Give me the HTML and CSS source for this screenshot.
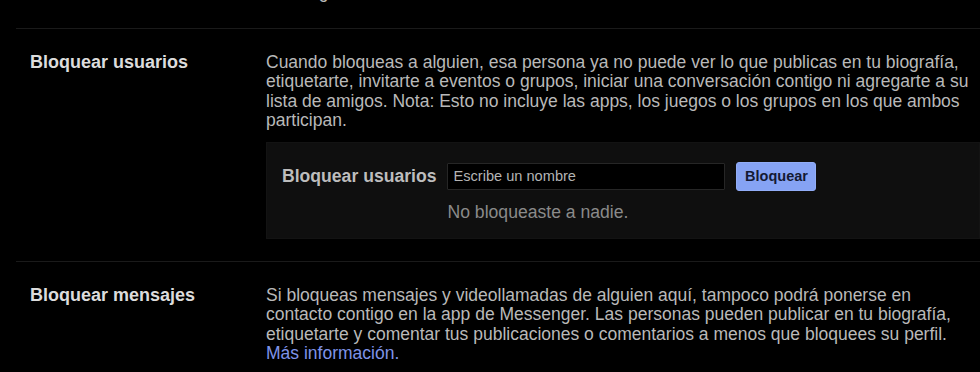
FILE: index.html
```html
<!DOCTYPE html>
<html lang="es">
<head>
<meta charset="utf-8">
<title>Bloquear</title>
<link rel="stylesheet" href="styles.css">
</head>
<body>
<div class="settings">
  <section class="row row-prev">
    <div class="label"></div>
    <div class="content"><p class="desc">Tu amigo</p></div>
  </section>
  <section class="row">
    <h3 class="label">Bloquear usuarios</h3>
    <div class="content">
      <p class="desc">Cuando bloqueas a alguien, esa persona ya no puede ver lo que publicas en tu biografía, etiquetarte, invitarte a eventos o grupos, iniciar una conversación contigo ni agregarte a su lista de amigos. Nota: Esto no incluye las apps, los juegos o los grupos en los que ambos participan.</p>
      <div class="panel">
        <span class="panel-label">Bloquear usuarios</span>
        <input class="panel-input" type="text" placeholder="Escribe un nombre">
        <button class="panel-btn" type="button">Bloquear</button>
        <span class="panel-note">No bloqueaste a nadie.</span>
      </div>
    </div>
  </section>
  <section class="row">
    <h3 class="label">Bloquear mensajes</h3>
    <div class="content">
      <p class="desc">Si bloqueas mensajes y videollamadas de alguien aquí, tampoco podrá ponerse en contacto contigo en la app de Messenger. Las personas pueden publicar en tu biografía, etiquetarte y comentar tus publicaciones o comentarios a menos que bloquees su perfil. <a class="link" href="#">Más información.</a></p>
    </div>
  </section>
</div>
</body>
</html>
```

FILE: styles.css
```css
html, body {
  margin: 0;
  padding: 0;
  background: #000;
  height: 100%;
  overflow: hidden;
}

body {
  font-family: "Liberation Sans", Arial, sans-serif;
  color: #b8b8b8;
}

.settings {
  padding-left: 16px;
}

.row {
  display: grid;
  grid-template-columns: 236px 1fr;
  padding: 24px 0 22px 14px;
  border-top: 1px solid #1a1a1a;
}

.row-prev {
  border-top: none;
  margin-top: -17px;
  padding-top: 0;
  padding-bottom: 25px;
}

.label {
  margin: 0;
  font-size: 18px;
  line-height: 19.6px;
  font-weight: bold;
  color: #dcdcdc;
}

.desc {
  margin: 0;
  max-width: 712px;
  font-size: 17.5px;
  line-height: 19.6px;
  color: #b9b9b9;
}

.link {
  color: #7f94e8;
  text-decoration: none;
}

.panel {
  margin-top: 11px;
  background: #0f0f0f;
  border: 1px solid #131313;
  display: grid;
  grid-template-columns: auto 278px auto 1fr;
  column-gap: 11px;
  row-gap: 12px;
  align-items: center;
  padding: 19px 16px 15px 15px;
}

.panel-label {
  font-size: 17.6px;
  font-weight: bold;
  color: #bdbdbd;
}

.panel-input {
  box-sizing: border-box;
  height: 27px;
  width: 278px;
  background: #000;
  border: 1px solid #262626;
  border-radius: 1px;
  padding: 0 5px;
  font-family: "Liberation Sans", Arial, sans-serif;
  font-size: 14.6px;
  color: #c8c8c8;
  outline: none;
}

.panel-input::placeholder {
  color: #b4b4b4;
}

.panel-btn {
  box-sizing: border-box;
  height: 29px;
  width: 80px;
  background: #86a3f4;
  border: 1px solid #92adf7;
  border-radius: 3px;
  font-family: "Liberation Sans", Arial, sans-serif;
  font-size: 14.5px;
  font-weight: bold;
  color: #141a33;
  padding: 0;
  cursor: pointer;
}

.panel-note {
  grid-column: 2 / -1;
  font-size: 17.6px;
  line-height: 19.6px;
  color: #8a8a8a;
}
```
